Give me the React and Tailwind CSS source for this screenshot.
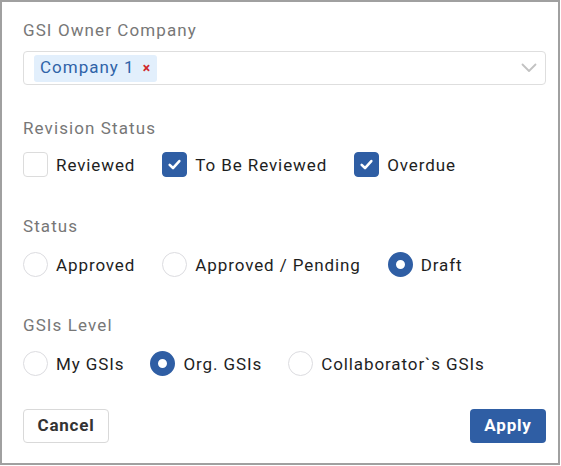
import { useState } from "react";

const BLUE = "bg-[#2f5ea4]";

const Checkbox = ({ label, checked, onChange }) => (
  <label className="flex items-center gap-[8px] cursor-pointer">
    <span
      onClick={onChange}
      className={`flex h-[25px] w-[25px] items-center justify-center rounded-[4px] ${checked ? `${BLUE} border border-[#2f5ea4]` : "border border-[#dcdcdc] bg-white"}`}
    >
      {checked && (
        <svg width="15" height="15" viewBox="0 0 14 14" fill="none">
          <path d="M2.5 7.4 L5.6 10.3 L11.5 3.8" stroke="white" strokeWidth="2.4" strokeLinecap="round" strokeLinejoin="round" />
        </svg>
      )}
    </span>
    <span className="text-[17px] leading-6 tracking-[0.9px] text-[#1e1e1e]">{label}</span>
  </label>
);

const Radio = ({ label, checked, onChange }) => (
  <label className="flex items-center gap-[8px] cursor-pointer" onClick={onChange}>
    <span
      className={`h-[25px] w-[25px] rounded-full ${checked ? "border-[8px] border-[#2f5ea4] bg-white" : "border border-[#dcdce0] bg-white"}`}
    />
    <span className="text-[17px] leading-6 tracking-[0.9px] text-[#1e1e1e]">{label}</span>
  </label>
);

const SectionLabel = ({ children, className = "" }) => (
  <div className={`text-[17px] leading-6 tracking-[1.1px] text-[#777777] ${className}`}>{children}</div>
);

export default function App() {
  const [revision, setRevision] = useState({ reviewed: false, toBeReviewed: true, overdue: true });
  const [status, setStatus] = useState("draft");
  const [level, setLevel] = useState("org");
  const toggle = (k) => setRevision((p) => ({ ...p, [k]: !p[k] }));

  return (
    <div className="w-[561px] h-[466px] bg-white" style={{ fontFamily: "Roboto, 'Liberation Sans', sans-serif" }}>
      <div className="w-[560px] h-[465px] border-2 border-[#a0a0a0] pl-[21px] pr-[12px] pt-[16px] flex flex-col">
        <SectionLabel>GSI Owner Company</SectionLabel>
        <div className="mt-[9px] h-[34px] rounded-[4px] border border-[#dedede] flex items-center pl-[10px] pr-[8px]">
          <span className="flex items-center h-[27px] rounded-[3px] bg-[#e2effc] px-[6px] text-[17px] tracking-[1px] text-[#2f63a8]">
            Company 1
            <span className="ml-[8px] text-[14px] font-bold text-[#d02a2a] leading-none">×</span>
          </span>
          <svg className="ml-auto" width="16" height="10" viewBox="0 0 16 10" fill="none">
            <path d="M1.5 1.5 L8 8 L14.5 1.5" stroke="#c2c2c2" strokeWidth="1.8" strokeLinecap="round" strokeLinejoin="round" />
          </svg>
        </div>

        <SectionLabel className="mt-[31px]">Revision Status</SectionLabel>
        <div className="mt-[12px] flex items-center gap-[27px]">
          <Checkbox label="Reviewed" checked={revision.reviewed} onChange={() => toggle("reviewed")} />
          <Checkbox label="To Be Reviewed" checked={revision.toBeReviewed} onChange={() => toggle("toBeReviewed")} />
          <Checkbox label="Overdue" checked={revision.overdue} onChange={() => toggle("overdue")} />
        </div>

        <SectionLabel className="mt-[37px]">Status</SectionLabel>
        <div className="mt-[14px] flex items-center gap-[27px]">
          <Radio label="Approved" checked={status === "approved"} onChange={() => setStatus("approved")} />
          <Radio label="Approved / Pending" checked={status === "pending"} onChange={() => setStatus("pending")} />
          <Radio label="Draft" checked={status === "draft"} onChange={() => setStatus("draft")} />
        </div>

        <SectionLabel className="mt-[36px]">GSIs Level</SectionLabel>
        <div className="mt-[14px] flex items-center gap-[26px]">
          <Radio label="My GSIs" checked={level === "my"} onChange={() => setLevel("my")} />
          <Radio label="Org. GSIs" checked={level === "org"} onChange={() => setLevel("org")} />
          <Radio label="Collaborator`s GSIs" checked={level === "collab"} onChange={() => setLevel("collab")} />
        </div>

        <div className="mt-[33px] flex justify-between">
          <button className="h-[34px] w-[86px] rounded-[4px] border border-[#d9d9d9] bg-white text-[17px] font-bold tracking-[0.8px] text-[#333333]">
            Cancel
          </button>
          <button className={`h-[34px] w-[76px] rounded-[4px] ${BLUE} text-[17px] font-bold tracking-[0.8px] text-white`}>
            Apply
          </button>
        </div>
      </div>
    </div>
  );
}
